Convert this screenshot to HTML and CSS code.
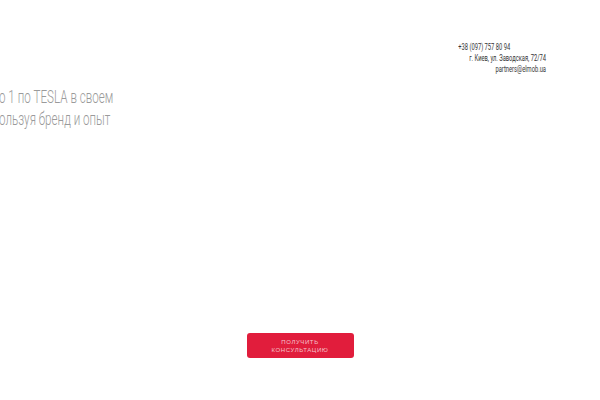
FILE: index.html
```html
<!DOCTYPE html>
<html>
<head>
<meta charset="utf-8">
<link rel="stylesheet" href="styles.css">
</head>
<body>
<div class="page">
  <header class="top">
    <div class="contacts">
      <div class="phone">+38 (097) 757 80 94</div>
      <div class="line">г. Киев, ул. Заводская, 72/74</div>
      <div class="line">partners@elmob.ua</div>
    </div>
  </header>
  <div class="slogan">
    <div class="l1">о 1 по TESLA в своем</div>
    <div class="l2">ользуя бренд и опыт</div>
  </div>
  <div class="cta">
    <a class="btn">ПОЛУЧИТЬ<br>КОНСУЛЬТАЦИЮ</a>
  </div>
</div>
</body>
</html>
```
FILE: styles.css
```css
html, body { margin: 0; padding: 0; background: #fff; }
.page {
  width: 600px; height: 400px; overflow: hidden;
  font-family: "Roboto", "DejaVu Sans Condensed", sans-serif;
}
.top { display: flex; justify-content: flex-end; padding: 42px 54px 0 0; }
.contacts {
  width: 137px;
  display: flex; flex-direction: column; align-items: flex-end;
  font-size: 9px; line-height: 11px; color: #333; font-weight: 400;
  transform: scaleX(0.64); transform-origin: right top;
}
.phone { align-self: flex-start; }
.slogan {
  margin-top: 11px; margin-left: -1px;
  font-size: 17.5px; line-height: 22px; color: #9a9a9a; font-weight: 300;
  transform: scaleX(0.665); transform-origin: left top;
}
.slogan div { white-space: nowrap; }
.cta { display: flex; justify-content: center; margin-top: 203px; }
.btn {
  display: flex; align-items: center; justify-content: center; text-align: center;
  width: 107px; height: 25px;
  background: #e11d3c; color: #f5c2cb; border-radius: 3px;
  font-family: "Liberation Sans", Arial, sans-serif;
  font-size: 6px; line-height: 8px; letter-spacing: 0.6px;
}
```
